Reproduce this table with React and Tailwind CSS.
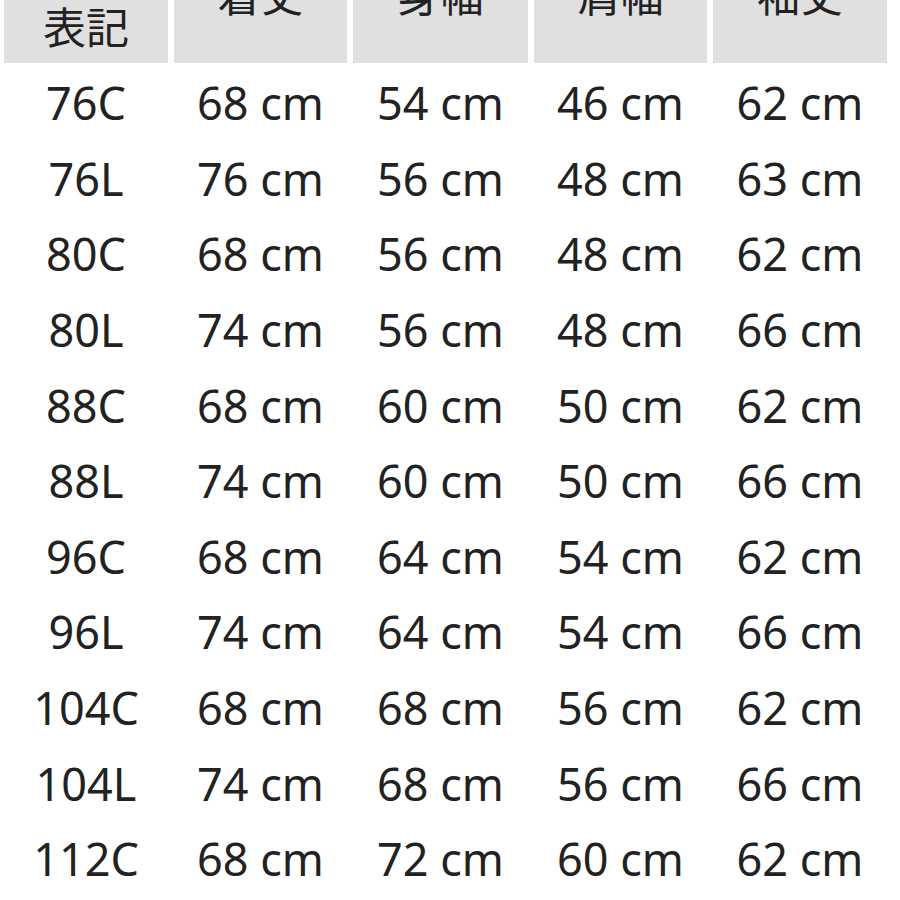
import React from 'react';

const headers = ['表記', '着丈', '身幅', '肩幅', '袖丈'];

const rows = [
  ['76C', 68, 54, 46, 62],
  ['76L', 76, 56, 48, 63],
  ['80C', 68, 56, 48, 62],
  ['80L', 74, 56, 48, 66],
  ['88C', 68, 60, 50, 62],
  ['88L', 74, 60, 50, 66],
  ['96C', 68, 64, 54, 62],
  ['96L', 74, 64, 54, 66],
  ['104C', 68, 68, 56, 62],
  ['104L', 74, 68, 56, 66],
  ['112C', 68, 72, 60, 62],
];

const cols = ['w-[164px]', 'w-[173px]', 'w-[175px]', 'w-[173px]', 'w-[174px]'];

export default function App() {
  return (
    <div
      className="w-[900px] h-[900px] overflow-hidden bg-white text-[#222222] pl-[4px]"
      style={{ fontFamily: '"Noto Sans", "Noto Sans CJK JP", sans-serif' }}
    >
      {/* Header */}
      <div className="flex gap-[6px] h-[63px]">
        {headers.map((h, i) => (
          <div
            key={h}
            className={`${cols[i]} h-full bg-[#e0e0e0] flex flex-col justify-end items-center ${
              i === 0 ? 'pb-[14px]' : 'pb-[46px]'
            }`}
          >
            <span className="text-[43px] leading-none">{h}</span>
          </div>
        ))}
      </div>

      {/* Body */}
      <div className="mt-[2px]">
        {rows.map((r) => (
          <div key={r[0]} className="flex gap-[6px] h-[75.6px] items-center">
            {r.map((v, i) => (
              <div key={i} className={`${cols[i]} text-center text-[45px] leading-none`}>
                {i === 0 ? v : `${v} cm`}
              </div>
            ))}
          </div>
        ))}
      </div>
    </div>
  );
}
